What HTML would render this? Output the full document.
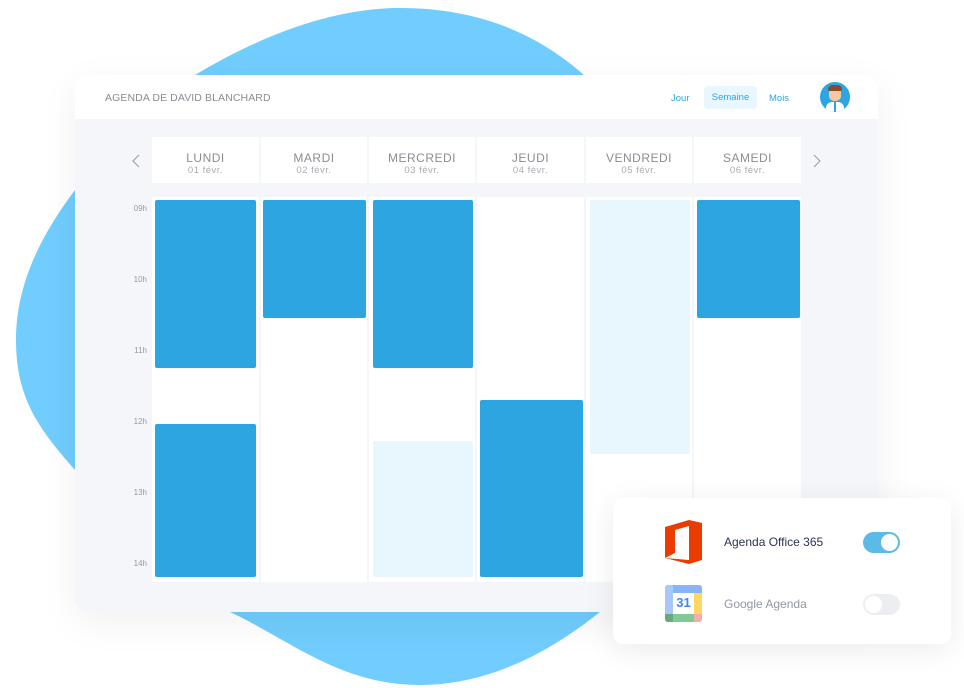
<!DOCTYPE html>
<html><head><meta charset="utf-8"><style>
*{margin:0;padding:0;box-sizing:border-box}
body{width:964px;height:688px;background:#fff;position:relative;overflow:hidden;font-family:"Liberation Sans",sans-serif}
.abs{position:absolute}
.card{left:75px;top:75px;width:803px;height:537px;background:#f4f6fa;border-radius:14px;overflow:hidden;box-shadow:0 10px 40px rgba(0,0,0,.06)}
.hdr{left:0;top:0;width:803px;height:44px;background:#fff}
.day{top:62px;height:46px;background:#fff;text-align:center;color:#8a8d93}
.day b{display:block;font-weight:normal;font-size:12px;letter-spacing:.5px;margin-top:14px}
.day i{display:block;font-style:normal;font-size:9.5px;color:#a8abb0;letter-spacing:.5px}
.col{top:122px;height:385px;background:#fff}
.ev{background:#2ca5e0;border-radius:2px}
.lt{background:#e8f6fe;border-radius:2px}
.h{left:52px;width:20px;text-align:right;font-size:8px;color:#999}
</style></head><body>
<svg class="abs" style="left:0;top:0" width="964" height="688"><path d="M400 8 C500 8 560 50 600 90 L650 300 L600 612 C540 660 480 685 420 685 C340 685 290 640 230 612 L75 470 C40 430 16 400 16 340 C16 280 45 230 75 190 C110 140 150 100 195 75 C270 30 340 8 400 8 Z" fill="#70cdfd"/></svg>
<div class="abs card">
 <div class="abs hdr"></div>
 <div class="abs" style="left:30px;top:17px;font-size:10.5px;color:#8a8d93;letter-spacing:.1px">AGENDA DE DAVID BLANCHARD</div>
 <div class="abs" style="left:596px;top:18px;font-size:9.5px;color:#2ca5e0">Jour</div>
 <div class="abs" style="left:629px;top:11px;width:53px;height:23px;background:#e8f6fe;border-radius:4px;font-size:9.5px;color:#2ca5e0;text-align:center;line-height:23px">Semaine</div>
 <div class="abs" style="left:694px;top:18px;font-size:9.5px;color:#2ca5e0">Mois</div>
 <div class="abs" style="left:745px;top:7px;width:30px;height:30px;border-radius:50%;background:#2ca5e0;overflow:hidden">
  <div class="abs" style="left:9px;top:5px;width:12px;height:14px;border-radius:5px;background:#f6c9a0"></div>
  <div class="abs" style="left:8px;top:3px;width:14px;height:6px;border-radius:5px 5px 2px 2px;background:#8a4b2a"></div>
  <div class="abs" style="left:6px;top:20px;width:18px;height:12px;border-radius:6px 6px 0 0;background:#fff"></div>
  <div class="abs" style="left:14px;top:20px;width:2px;height:10px;background:#2ca5e0"></div>
 </div>
 <svg class="abs" style="left:57px;top:79px" width="8" height="14"><path d="M7 1 L1 7 L7 13" fill="none" stroke="#999" stroke-width="1"/></svg>
 <svg class="abs" style="left:738px;top:79px" width="8" height="14"><path d="M1 1 L7 7 L1 13" fill="none" stroke="#999" stroke-width="1"/></svg>
 <div class="abs day" style="left:77px;width:107px"><b>LUNDI</b><i>01 févr.</i></div>
 <div class="abs day" style="left:186px;width:106px"><b>MARDI</b><i>02 févr.</i></div>
 <div class="abs day" style="left:294px;width:106px"><b>MERCREDI</b><i>03 févr.</i></div>
 <div class="abs day" style="left:402px;width:107px"><b>JEUDI</b><i>04 févr.</i></div>
 <div class="abs day" style="left:511px;width:106px"><b>VENDREDI</b><i>05 févr.</i></div>
 <div class="abs day" style="left:619px;width:107px"><b>SAMEDI</b><i>06 févr.</i></div>
 <div class="abs col" style="left:77px;width:107px"></div>
 <div class="abs col" style="left:186px;width:106px"></div>
 <div class="abs col" style="left:294px;width:106px"></div>
 <div class="abs col" style="left:402px;width:107px"></div>
 <div class="abs col" style="left:511px;width:106px"></div>
 <div class="abs col" style="left:619px;width:107px"></div>
 <div class="abs h" style="top:129px">09h</div>
 <div class="abs h" style="top:200px">10h</div>
 <div class="abs h" style="top:271px">11h</div>
 <div class="abs h" style="top:342px">12h</div>
 <div class="abs h" style="top:413px">13h</div>
 <div class="abs h" style="top:484px">14h</div>
 <div class="abs ev" style="left:80px;top:125px;width:101px;height:168px"></div>
 <div class="abs ev" style="left:80px;top:349px;width:101px;height:153px"></div>
 <div class="abs ev" style="left:188px;top:125px;width:103px;height:118px"></div>
 <div class="abs ev" style="left:298px;top:125px;width:100px;height:168px"></div>
 <div class="abs lt" style="left:298px;top:366px;width:100px;height:136px"></div>
 <div class="abs ev" style="left:405px;top:325px;width:103px;height:177px"></div>
 <div class="abs lt" style="left:515px;top:125px;width:100px;height:254px"></div>
 <div class="abs ev" style="left:622px;top:125px;width:103px;height:118px"></div>
</div>
<div class="abs" style="left:613px;top:498px;width:338px;height:146px;background:#fff;border-radius:10px;box-shadow:0 6px 30px rgba(0,0,0,.08)">
 <svg class="abs" style="left:52px;top:22px" width="38" height="44" viewBox="0 0 38 44"><path d="M0 7 L24 0 L37 3 L37 40 L24 44 L0 38 L24 40 L24 6 L10 10 L10 33 L0 38 Z" fill="#eb3c00"/></svg>
 <div class="abs" style="left:111px;top:37px;font-size:12px;color:#2a3450">Agenda Office 365</div>
 <div class="abs" style="left:250px;top:34px;width:37px;height:21px;border-radius:11px;background:#5bbbe8"><div class="abs" style="left:18px;top:2px;width:17px;height:17px;border-radius:50%;background:#fff"></div></div>
 <div class="abs" style="left:52px;top:87px;width:37px;height:37px;border-radius:3px;overflow:hidden;background:#fff">
  <div class="abs" style="left:0;top:0;width:37px;height:8px;background:#8ab4f8"></div>
  <div class="abs" style="left:0;top:0;width:8px;height:37px;background:#a8c7fa"></div>
  <div class="abs" style="left:29px;top:0;width:8px;height:37px;background:#fdd663"></div>
  <div class="abs" style="left:29px;top:0;width:8px;height:8px;background:#8ab4f8"></div>
  <div class="abs" style="left:0;top:29px;width:37px;height:8px;background:#81c995"></div>
  <div class="abs" style="left:0;top:29px;width:8px;height:8px;background:#6aa97c"></div>
  <div class="abs" style="left:29px;top:29px;width:8px;height:8px;background:#f6aea9"></div>
  <div class="abs" style="left:8px;top:10px;width:21px;height:18px;text-align:center;font-size:13px;font-weight:bold;color:#4285f4">31</div>
 </div>
 <div class="abs" style="left:111px;top:99px;font-size:12px;color:#9097a6">Google Agenda</div>
 <div class="abs" style="left:250px;top:96px;width:37px;height:21px;border-radius:11px;background:#eceef2"><div class="abs" style="left:2px;top:2px;width:17px;height:17px;border-radius:50%;background:#fff"></div></div>
</div>
</body></html>
